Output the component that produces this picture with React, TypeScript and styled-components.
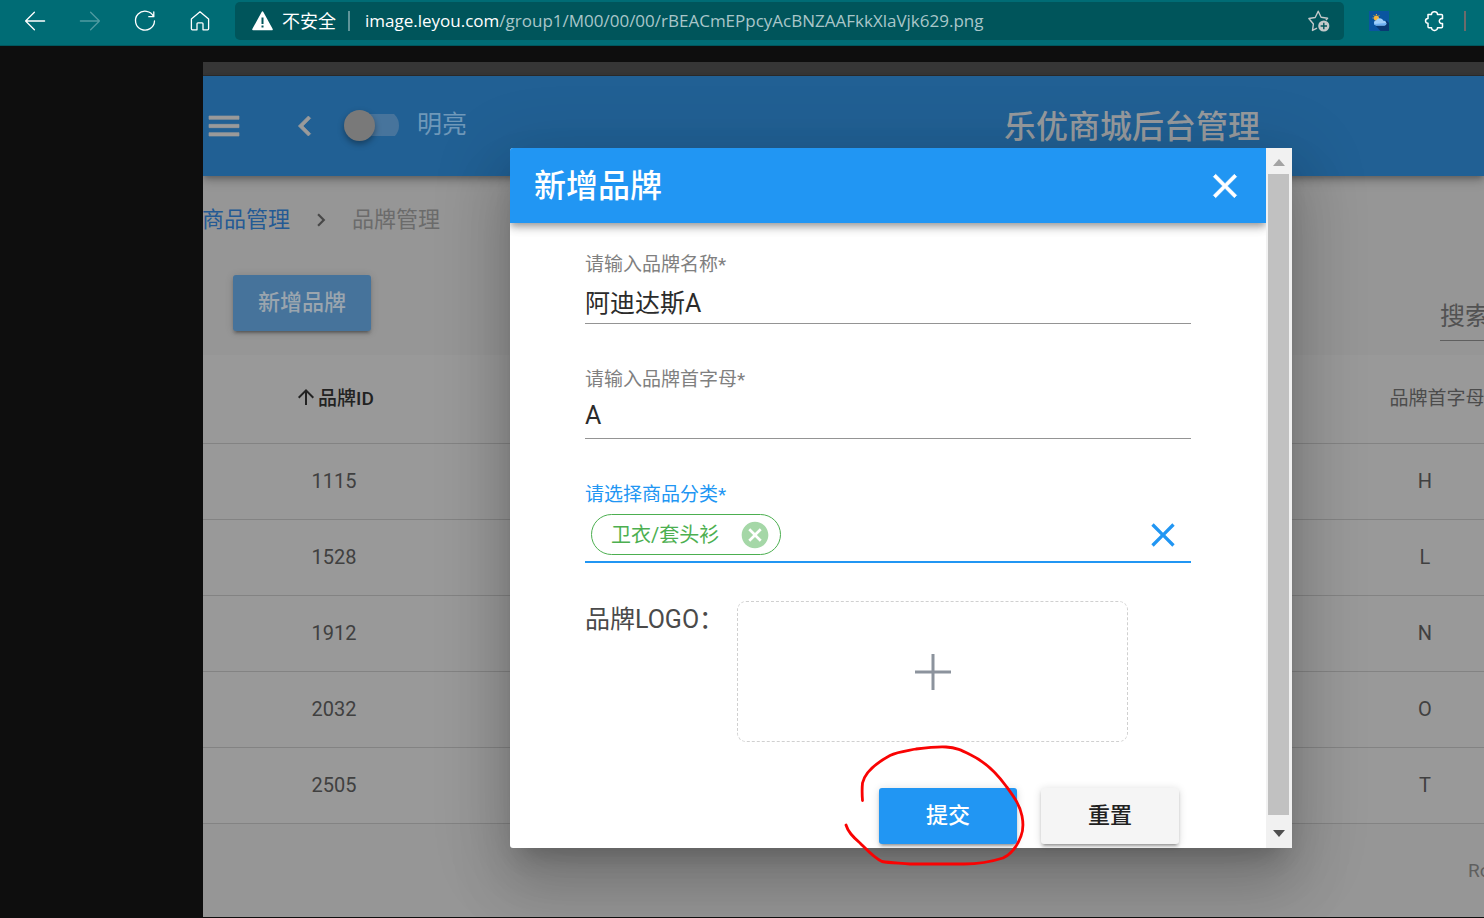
import React from "react";
import styled, { createGlobalStyle } from "styled-components";

const GlobalStyle = createGlobalStyle`
  *, *::before, *::after { box-sizing: border-box; }
  body {
    margin: 0;
    background: #0e0e0e;
    font-family: Roboto, "Noto Sans CJK SC", sans-serif;
    overflow: hidden;
  }
  button, input { font-family: inherit; }
`;

const Page = styled.div`
  display: flex;
  flex-direction: column;
  min-height: 100vh;
`;

/* ---------- browser chrome ---------- */

const BrowserBar = styled.header`
  display: flex;
  align-items: center;
  height: 46px;
  padding: 0 18px 4px 25px;
  background: #006c75;
  border-bottom: 1px solid #00575e;
`;

const BrowserNav = styled.nav`
  display: flex;
  gap: 35px;
  margin-right: 25px;
`;

const IconButton = styled.button<{ $size: number; $color?: string }>`
  display: flex;
  flex: none;
  align-items: center;
  justify-content: center;
  width: ${(p) => p.$size}px;
  height: ${(p) => p.$size}px;
  padding: 0;
  border: 0;
  background: none;
  color: ${(p) => p.$color ?? "#fff"};
  cursor: pointer;

  svg {
    display: block;
    width: 100%;
    height: 100%;
  }
`;

const AddressBar = styled.div`
  display: flex;
  flex: 1;
  align-items: center;
  min-width: 0;
  height: 38px;
  padding: 0 14px 0 17px;
  border-radius: 5px;
  background: #00555b;
  color: #fff;
  font-family: "Open Sans", "Noto Sans CJK SC", sans-serif;
  font-size: 18px;
  line-height: 24px;
  white-space: nowrap;
`;

const Insecure = styled.span`
  display: flex;
  align-items: center;
  gap: 9px;
  padding-right: 12px;
`;

const Divider = styled.span<{ $color: string }>`
  flex: none;
  width: 2px;
  height: 20px;
  background: ${(p) => p.$color};
`;

const Url = styled.div`
  flex: 1;
  min-width: 0;
  margin-left: 15px;
  overflow: hidden;
  color: #a9c6c9;
  font-size: 17px;
`;

const UrlHost = styled.span`
  color: #fff;
`;

const Extensions = styled.div`
  display: flex;
  align-items: center;
  gap: 35px;
  margin: 0 20px 0 25px;
`;

/* ---------- admin page ---------- */

const Viewer = styled.div`
  display: flex;
  flex: 1;
  padding: 16px 0 1px 203px;
`;

const Stage = styled.div`
  position: relative;
  flex: 1;
  min-width: 0;
  overflow: hidden;
  background: #969696;
`;

const TopStrip = styled.div`
  height: 14px;
  background: #363636;
  border-bottom: 1px solid #2b2b2b;
`;

const AppBar = styled.header`
  position: relative;
  display: flex;
  align-items: center;
  height: 100px;
  padding-left: 1px;
  background: #216094;
  box-shadow: 0 3px 6px -1px rgba(0, 0, 0, 0.3), 0 6px 10px rgba(0, 0, 0, 0.14);
`;

const BackSlot = styled.div`
  margin: 0 19px 0 41px;
`;

const SwitchLabel = styled.label`
  display: flex;
  align-items: center;
  gap: 18px;
  padding-bottom: 2px;
  color: #6f98b9;
  font-size: 25px;
  line-height: 36px;
`;

const Switch = styled.input`
  appearance: none;
  display: flex;
  align-items: center;
  width: 55px;
  height: 31px;
  margin: 0;
  background: linear-gradient(#47749c, #47749c) right center / 44px 22px no-repeat;
  border-radius: 11px 16px 16px 11px;

  &::before {
    content: "";
    width: 31px;
    height: 31px;
    border-radius: 50%;
    background: #797979;
    box-shadow: 0 3px 6px rgba(0, 0, 0, 0.35);
  }
`;

const AppTitle = styled.h1`
  margin: 0 224px 0 auto;
  padding-top: 2px;
  color: #979a9d;
  font-size: 32px;
  font-weight: 500;
  line-height: 48px;
  white-space: nowrap;
`;

const Breadcrumb = styled.nav`
  display: flex;
  align-items: center;
  height: 88px;
  font-size: 22px;
  line-height: 32px;
  color: #6b6b6b;
`;

const CrumbLink = styled.a`
  margin-left: -1px;
  color: #245a94;
  text-decoration: none;
`;

const CrumbArrow = styled.svg`
  width: 26px;
  height: 26px;
  margin: 0 18px;
  fill: #484848;
`;

const ListActions = styled.div`
  display: flex;
  align-items: flex-end;
  justify-content: space-between;
  height: 91px;
  padding-left: 30px;
`;

const Button = styled.button<{ $bg: string; $color: string }>`
  min-width: 138px;
  height: 56px;
  padding: 0 24px;
  border: 0;
  border-radius: 3px;
  background: ${(p) => p.$bg};
  color: ${(p) => p.$color};
  font-size: 22px;
  font-weight: 500;
  line-height: 32px;
  box-shadow: 0 4px 2px -3px rgba(0, 0, 0, 0.25), 0 3px 3px rgba(0, 0, 0, 0.16),
    0 1px 8px rgba(0, 0, 0, 0.14);
  cursor: pointer;
`;

const NewBrand = styled.div`
  margin-bottom: 24px;
`;

const Search = styled.input`
  width: 200px;
  height: 49px;
  margin: 0 -156px 14px 0;
  padding: 0;
  border: 0;
  border-bottom: 1px solid #5f5f5f;
  background: none;
  font-size: 25px;

  &::placeholder {
    color: #525252;
    opacity: 1;
  }
`;

const Table = styled.table`
  width: calc(100% + 16px);
  border-collapse: collapse;
  table-layout: fixed;
  background: #999;
  color: #404040;
  font-size: 20px;
`;

const Row = styled.tr<{ $head?: boolean }>`
  height: ${(p) => (p.$head ? 88 : 76)}px;
  border-bottom: 1px solid #838383;
`;

const Cell = styled.td`
  padding: 0;
  text-align: center;
`;

const HeadCell = styled.th<{ $width?: number; $sorted?: boolean }>`
  width: ${(p) => (p.$width ? `${p.$width}px` : "auto")};
  padding: 0 0 4px;
  color: ${(p) => (p.$sorted ? "#222" : "#4c4c4c")};
  font-size: 19px;
  font-weight: ${(p) => (p.$sorted ? 500 : 400)};
  white-space: nowrap;
`;

const HeadLabel = styled.span`
  display: flex;
  align-items: center;
  justify-content: center;
`;

const SortArrow = styled.svg<{ $on: boolean }>`
  flex: none;
  width: 24px;
  height: 24px;
  visibility: ${(p) => (p.$on ? "visible" : "hidden")};
  fill: currentColor;
`;

const Pager = styled.div`
  display: flex;
  align-items: center;
  justify-content: flex-end;
  height: 93px;
  color: #5f5f5f;
  font-size: 19px;
`;

const PagerLabel = styled.span`
  width: 16px;
  white-space: nowrap;
`;

/* ---------- dialog ---------- */

const Dialog = styled.section`
  position: absolute;
  top: 86px;
  left: 307px;
  right: 192px;
  display: flex;
  border-radius: 3px;
  background: #fff;
  box-shadow: 0 17px 23px -11px rgba(0, 0, 0, 0.2), 0 38px 59px 5px rgba(0, 0, 0, 0.14),
    0 14px 72px 12px rgba(0, 0, 0, 0.12);
`;

const DialogMain = styled.div`
  flex: 1;
  min-width: 0;
`;

const DialogBar = styled.header`
  display: flex;
  align-items: center;
  justify-content: space-between;
  height: 75px;
  padding: 0 21px 0 24px;
  border-radius: 3px 0 0 0;
  background: #2196f3;
  box-shadow: 0 3px 6px -1px rgba(0, 0, 0, 0.25), 0 6px 8px rgba(0, 0, 0, 0.14),
    0 2px 14px rgba(0, 0, 0, 0.1);
  clip-path: inset(0 0 -30px 0);
`;

const DialogTitle = styled.h2`
  margin: 0;
  color: #fff;
  font-size: 32px;
  font-weight: 500;
  line-height: 48px;
`;

const Form = styled.form`
  padding: 29px 75px 4px;
`;

const Field = styled.div`
  margin-bottom: 43px;
`;

const FieldLabel = styled.label<{ $active?: boolean }>`
  display: block;
  color: ${(p) => (p.$active ? "#2196f3" : "#808080")};
  font-size: 19px;
  line-height: 26px;
`;

const TextInput = styled.input`
  display: block;
  width: 100%;
  height: 46px;
  padding: 0;
  border: 0;
  border-bottom: 1px solid #949494;
  border-radius: 0;
  outline: 0;
  background: none;
  color: #2b2b2b;
  font-size: 25px;
  line-height: 38px;
`;

const ChipBox = styled.div`
  display: flex;
  align-items: center;
  height: 55px;
  padding: 0 8px 0 6px;
  border-bottom: 2px solid #2196f3;
`;

const Chip = styled.span`
  display: flex;
  align-items: center;
  height: 41px;
  padding: 1px 9px 0 19px;
  border: 1px solid #4caf50;
  border-radius: 21px;
  color: #4caf50;
  font-size: 20px;
  line-height: 30px;
  gap: 20px;
  white-space: nowrap;
`;

const ChipInput = styled.input`
  flex: 1;
  min-width: 0;
  height: 40px;
  border: 0;
  outline: 0;
  background: none;
  font-size: 25px;
`;

const LogoRow = styled.div`
  display: flex;
  margin-top: -5px;
`;

const LogoLabel = styled.label`
  width: 152px;
  color: #4a4a4a;
  font-size: 25px;
  line-height: 38px;
  white-space: nowrap;
`;

const Upload = styled.button`
  display: flex;
  align-items: center;
  justify-content: center;
  width: 391px;
  height: 141px;
  border: 1px dashed #d0d0d0;
  border-radius: 9px;
  background: #fff;
  cursor: pointer;
`;

const Actions = styled.div`
  display: flex;
  justify-content: flex-end;
  gap: 24px;
  margin-top: 46px;
  padding-right: 12px;
`;

const ScrollBar = styled.div`
  display: flex;
  flex-direction: column;
  width: 26px;
  background: #f1f1f1;
`;

const ScrollButton = styled.button<{ $color: string; $height: number }>`
  display: flex;
  align-items: center;
  justify-content: center;
  height: ${(p) => p.$height}px;
  padding: 3px 0 0;
  border: 0;
  background: none;
  color: ${(p) => p.$color};
`;

const ScrollThumb = styled.div`
  flex: 1;
  margin: 0 3px 0 2px;
  background: #c1c1c1;
`;

const Scribble = styled.svg`
  position: absolute;
  right: 262px;
  bottom: -22px;
  width: 190px;
  height: 130px;
  pointer-events: none;
`;

const CLOSE =
  "M19 6.41L17.59 5 12 10.59 6.41 5 5 6.41 10.59 12 5 17.59 6.41 19 12 13.41 17.59 19 19 17.59 13.41 12z";
const CANCEL =
  "M12 2C6.47 2 2 6.47 2 12s4.47 10 10 10 10-4.47 10-10S17.53 2 12 2zm5 13.59L15.59 17 12 13.41 8.41 17 7 15.59 10.59 12 7 8.41 8.41 7 12 10.59 15.59 7 17 8.41 13.41 12 17 15.59z";
const ARROW_UP = "M4 12l1.41 1.41L11 7.83V20h2V7.83l5.58 5.59L20 12l-8-8-8 8z";

const Glyph = ({ d, bold }: { d: string; bold?: boolean }) => (
  <svg
    viewBox="0 0 24 24"
    fill="currentColor"
    stroke={bold ? "currentColor" : "none"}
    strokeWidth="0.4"
    aria-hidden="true"
  >
    <path d={d} />
  </svg>
);

const LineIcon = ({ children }: { children: React.ReactNode }) => (
  <svg
    viewBox="0 0 20 20"
    fill="none"
    stroke="currentColor"
    strokeWidth="1.3"
    strokeLinecap="round"
    strokeLinejoin="round"
    overflow="visible"
    aria-hidden="true"
  >
    {children}
  </svg>
);

const rows = [
  ["1115", "H"],
  ["1528", "L"],
  ["1912", "N"],
  ["2032", "O"],
  ["2505", "T"],
];

const Chrome = () => (
  <BrowserBar>
    <BrowserNav>
      <IconButton $size={20} aria-label="后退">
        <LineIcon>
          <path d="M19.6 10H.6M9.4 1.2L.6 10l8.8 8.8" />
        </LineIcon>
      </IconButton>
      <IconButton $size={20} $color="#4f9ba1" aria-label="前进">
        <LineIcon>
          <path d="M.4 10h19M10.6 1.2l8.8 8.8-8.8 8.8" />
        </LineIcon>
      </IconButton>
      <IconButton $size={20} aria-label="刷新">
        <LineIcon>
          <path d="M18.6 5.6A9.5 9.5 0 1 0 19.5 10M18.8.8v4.9h-5" />
        </LineIcon>
      </IconButton>
      <IconButton $size={20} aria-label="主页">
        <LineIcon>
          <path d="M1.4 8L10 .8 18.6 8v9.8a1 1 0 0 1-1 1H13v-6a1 1 0 0 0-1-1H8a1 1 0 0 0-1 1v6H2.4a1 1 0 0 1-1-1z" />
        </LineIcon>
      </IconButton>
    </BrowserNav>

    <AddressBar>
      <Insecure>
        <svg width="21" height="20" viewBox="0 0 21 20" aria-hidden="true">
          <path d="M10.5 1.2L20 18.500H1z" fill="#fff" stroke="#fff" strokeWidth="1.6" strokeLinejoin="round" />
          <path d="M10.5 6.5v6.5M10.5 14.500v2" stroke="#00555b" strokeWidth="2" />
        </svg>
        不安全
      </Insecure>
      <Divider $color="#5f9499" />
      <Url role="textbox" aria-label="地址" aria-readonly="true">
        <UrlHost>image.leyou.com</UrlHost>/group1/M00/00/00/rBEACmEPpcyAcBNZAAFkkXlaVjk629.png
      </Url>
      <IconButton $size={22} $color="#c3c9ca" aria-label="收藏">
        <svg viewBox="0 0 22 22" fill="none" aria-hidden="true">
          <path
            d="M9 18.2L4.500 20.400l.9-6.400L.9 8.500l6.300-1L10.200 1.200l2.900 6.100 6.500.9-1.700 1.900"
            stroke="currentColor"
            strokeWidth="1.4"
            strokeLinejoin="round"
          />
          <circle cx="15.8" cy="16" r="5.6" fill="currentColor" />
          <path d="M15.8 12.800v6.400M12.600 16H19" stroke="#00555b" strokeWidth="1.4" />
        </svg>
      </IconButton>
    </AddressBar>

    <Extensions>
      <IconButton $size={20} aria-label="天气">
        <svg viewBox="0 0 20 20" aria-hidden="true">
          <path d="M0 0h20v20H0z" fill="#0a55a0" />
          <path d="M6 14l5.500 6H20v-8l-2.500-2.500z" fill="#083a73" />
          <circle cx="7.4" cy="7" r="2.6" fill="#f5b33c" />
          <path d="M7.4 3v1M3.600 7h1M4.700 4.300l.7.700M10.200 4.300l-.7.700" stroke="#f5b33c" />
          <path d="M7 14.500a2.700 2.700 0 0 1 .2-5.300 4 4 0 0 1 7.200.6 2.400 2.400 0 0 1 1 4.700z" fill="#9fd0fb" />
          <path d="M5 13a2.700 2.700 0 0 0 2 1.500h8.400A2.400 2.400 0 0 0 17.500 12z" fill="#6db1f2" />
        </svg>
      </IconButton>
      <IconButton $size={20} aria-label="扩展">
        <LineIcon>
          <path
            strokeWidth="1.5"
            d="M4 3.500h3.500A2.600 2.600 0 0 1 10.500.7a2.600 2.600 0 0 1 3 2.800h4a1 1 0 0 1 1 1v3.200a2.500 2.500 0 1 0 0 4.800v3.300a1 1 0 0 1-1 1h-4a2.600 2.600 0 0 1-3 2.600 2.600 2.600 0 0 1-3-2.600H5a1 1 0 0 1-1-1v-3.500A2.600 2.600 0 0 1 1.500 10 2.600 2.600 0 0 1 4 7.500z"
          />
        </LineIcon>
      </IconButton>
    </Extensions>
    <Divider $color="#6d6b6b" />
  </BrowserBar>
);

const BrandDialog = () => (
  <Dialog role="dialog" aria-labelledby="dialog-title">
    <DialogMain>
      <DialogBar>
        <DialogTitle id="dialog-title">新增品牌</DialogTitle>
        <IconButton $size={40} aria-label="关闭">
          <Glyph d={CLOSE} bold />
        </IconButton>
      </DialogBar>
      <Form onSubmit={(e) => e.preventDefault()}>
        <Field>
          <FieldLabel htmlFor="name">请输入品牌名称*</FieldLabel>
          <TextInput id="name" defaultValue="阿迪达斯A" />
        </Field>
        <Field>
          <FieldLabel htmlFor="letter">请输入品牌首字母*</FieldLabel>
          <TextInput id="letter" defaultValue="A" />
        </Field>
        <Field>
          <FieldLabel htmlFor="category" $active>
            请选择商品分类*
          </FieldLabel>
          <ChipBox>
            <Chip>
              卫衣/套头衫
              <IconButton type="button" $size={32} $color="#a5d7a7" aria-label="移除">
                <Glyph d={CANCEL} />
              </IconButton>
            </Chip>
            <ChipInput id="category" />
            <IconButton type="button" $size={40} $color="#2196f3" aria-label="清除">
              <Glyph d={CLOSE} />
            </IconButton>
          </ChipBox>
        </Field>
        <LogoRow>
          <LogoLabel htmlFor="logo">品牌LOGO：</LogoLabel>
          <Upload id="logo" type="button">
            <svg width="36" height="36" viewBox="0 0 36 36" aria-hidden="true">
              <path d="M18 0v36M0 18h36" stroke="#8c939d" strokeWidth="3" />
            </svg>
          </Upload>
        </LogoRow>
        <Actions>
          <Button type="submit" $bg="#2196f3" $color="#fff">
            提交
          </Button>
          <Button type="reset" $bg="#f5f5f5" $color="#212121">
            重置
          </Button>
        </Actions>
      </Form>
    </DialogMain>
    <ScrollBar>
      <ScrollButton type="button" $height={26} $color="#a3a3a3" aria-label="向上滚动">
        <svg width="12" height="7" viewBox="0 0 12 7">
          <path d="M6 0l6 7H0z" fill="currentColor" />
        </svg>
      </ScrollButton>
      <ScrollThumb />
      <ScrollButton type="button" $height={33} $color="#505050" aria-label="向下滚动">
        <svg width="12" height="7" viewBox="0 0 12 7">
          <path d="M6 7l6-7H0z" fill="currentColor" />
        </svg>
      </ScrollButton>
    </ScrollBar>
    <Scribble viewBox="0 0 190 130" aria-hidden="true">
      <path
        d="M22.5 60.500C22 54 22 48 22.500 43C25 32 38 22 50 15.500C58 11.500 66 11 76 9C88 7.500 98 6.500 106 7C116 7.500 122 10.500 130 14.500C146 22 158 35 166 46C174 57 180 65 182 76C183.500 84 183 91 181 96C177 107 171 114 163 118C152 121.500 138 124 124 124H70C60 123 50 123 42 121.500C34 118 26 109 20 103C14 98 8 92 6 85"
        fill="none"
        stroke="#f90303"
        strokeWidth="2.8"
        strokeLinecap="round"
      />
    </Scribble>
  </Dialog>
);

export default function App() {
  return (
    <Page>
      <GlobalStyle />
      <Chrome />
      <Viewer>
        <Stage>
          <TopStrip />
          <AppBar>
            <IconButton $size={40} $color="#9a9a9a" aria-label="菜单">
              <Glyph d="M3 18h18v-2H3v2zm0-5h18v-2H3v2zm0-7v2h18V6H3z" bold />
            </IconButton>
            <BackSlot>
              <IconButton $size={40} $color="#9a9a9a" aria-label="收起">
                <Glyph d="M15.41 7.410L14 6l-6 6 6 6 1.410-1.410L10.830 12z" bold />
              </IconButton>
            </BackSlot>
            <SwitchLabel>
              <Switch type="checkbox" />
              明亮
            </SwitchLabel>
            <AppTitle>乐优商城后台管理</AppTitle>
          </AppBar>
          <Breadcrumb aria-label="导航">
            <CrumbLink href="#">商品管理</CrumbLink>
            <CrumbArrow viewBox="0 0 24 24" aria-hidden="true">
              <path d="M10 6L8.590 7.410 13.170 12l-4.580 4.590L10 18l6-6z" />
            </CrumbArrow>
            <span>品牌管理</span>
          </Breadcrumb>
          <ListActions>
            <NewBrand>
              <Button type="button" $bg="#46739b" $color="#9ba5ae">
                新增品牌
              </Button>
            </NewBrand>
            <Search placeholder="搜索" aria-label="搜索" />
          </ListActions>
          <Table>
            <thead>
              <Row $head>
                <HeadCell $width={262} $sorted>
                  <HeadLabel>
                    <SortArrow $on viewBox="0 0 24 24">
                      <path d={ARROW_UP} />
                    </SortArrow>
                    品牌ID
                  </HeadLabel>
                </HeadCell>
                <HeadCell />
                <HeadCell $width={150}>
                  <HeadLabel>
                    <SortArrow $on={false} />
                    品牌首字母
                  </HeadLabel>
                </HeadCell>
              </Row>
            </thead>
            <tbody>
              {rows.map(([id, letter]) => (
                <Row key={id}>
                  <Cell>{id}</Cell>
                  <Cell />
                  <Cell>{letter}</Cell>
                </Row>
              ))}
            </tbody>
          </Table>
          <Pager>
            <PagerLabel>Rows per page:</PagerLabel>
          </Pager>
          <BrandDialog />
        </Stage>
      </Viewer>
    </Page>
  );
}
